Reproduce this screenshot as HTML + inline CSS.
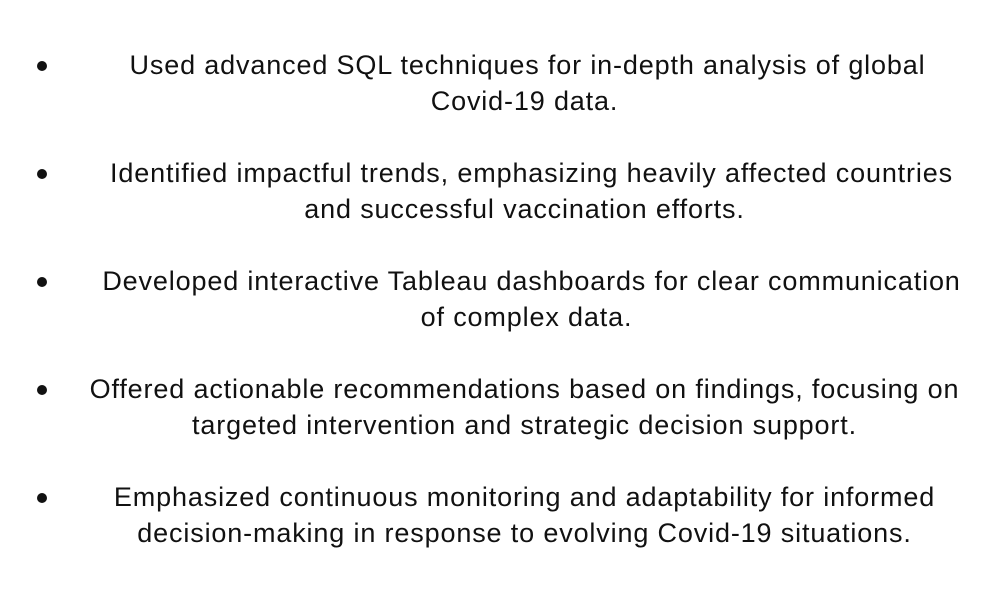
<!DOCTYPE html>
<html><head><meta charset="utf-8"><style>
html,body{margin:0;padding:0;background:#fff;}
body{width:1004px;height:590px;position:relative;overflow:hidden;font-family:"Liberation Sans",sans-serif;color:#111;}
.l{position:absolute;left:60px;width:935px;text-align:center;font-size:27px;letter-spacing:0.85px;line-height:36px;white-space:nowrap;}
.b{position:absolute;left:37px;width:10px;height:10px;border-radius:50%;background:#111;}
</style></head><body>
<div class="b" style="top:61px"></div>
<div class="l" style="top:47px">Used advanced SQL techniques for in-depth analysis of global</div>
<div class="l" style="top:83px;left:57px">Covid-19 data.</div>
<div class="b" style="top:169px"></div>
<div class="l" style="top:155px;left:64px">Identified impactful trends, emphasizing heavily affected countries</div>
<div class="l" style="top:191px;left:57px">and successful vaccination efforts.</div>
<div class="b" style="top:277px"></div>
<div class="l" style="top:263px;left:64px">Developed interactive Tableau dashboards for clear communication</div>
<div class="l" style="top:299px;left:59px">of complex data.</div>
<div class="b" style="top:385px"></div>
<div class="l" style="top:371px;left:57px">Offered actionable recommendations based on findings, focusing on</div>
<div class="l" style="top:407px;left:57px">targeted intervention and strategic decision support.</div>
<div class="b" style="top:493px"></div>
<div class="l" style="top:479px;left:57px">Emphasized continuous monitoring and adaptability for informed</div>
<div class="l" style="top:515px;left:57px">decision-making in response to evolving Covid-19 situations.</div>
</body></html>
